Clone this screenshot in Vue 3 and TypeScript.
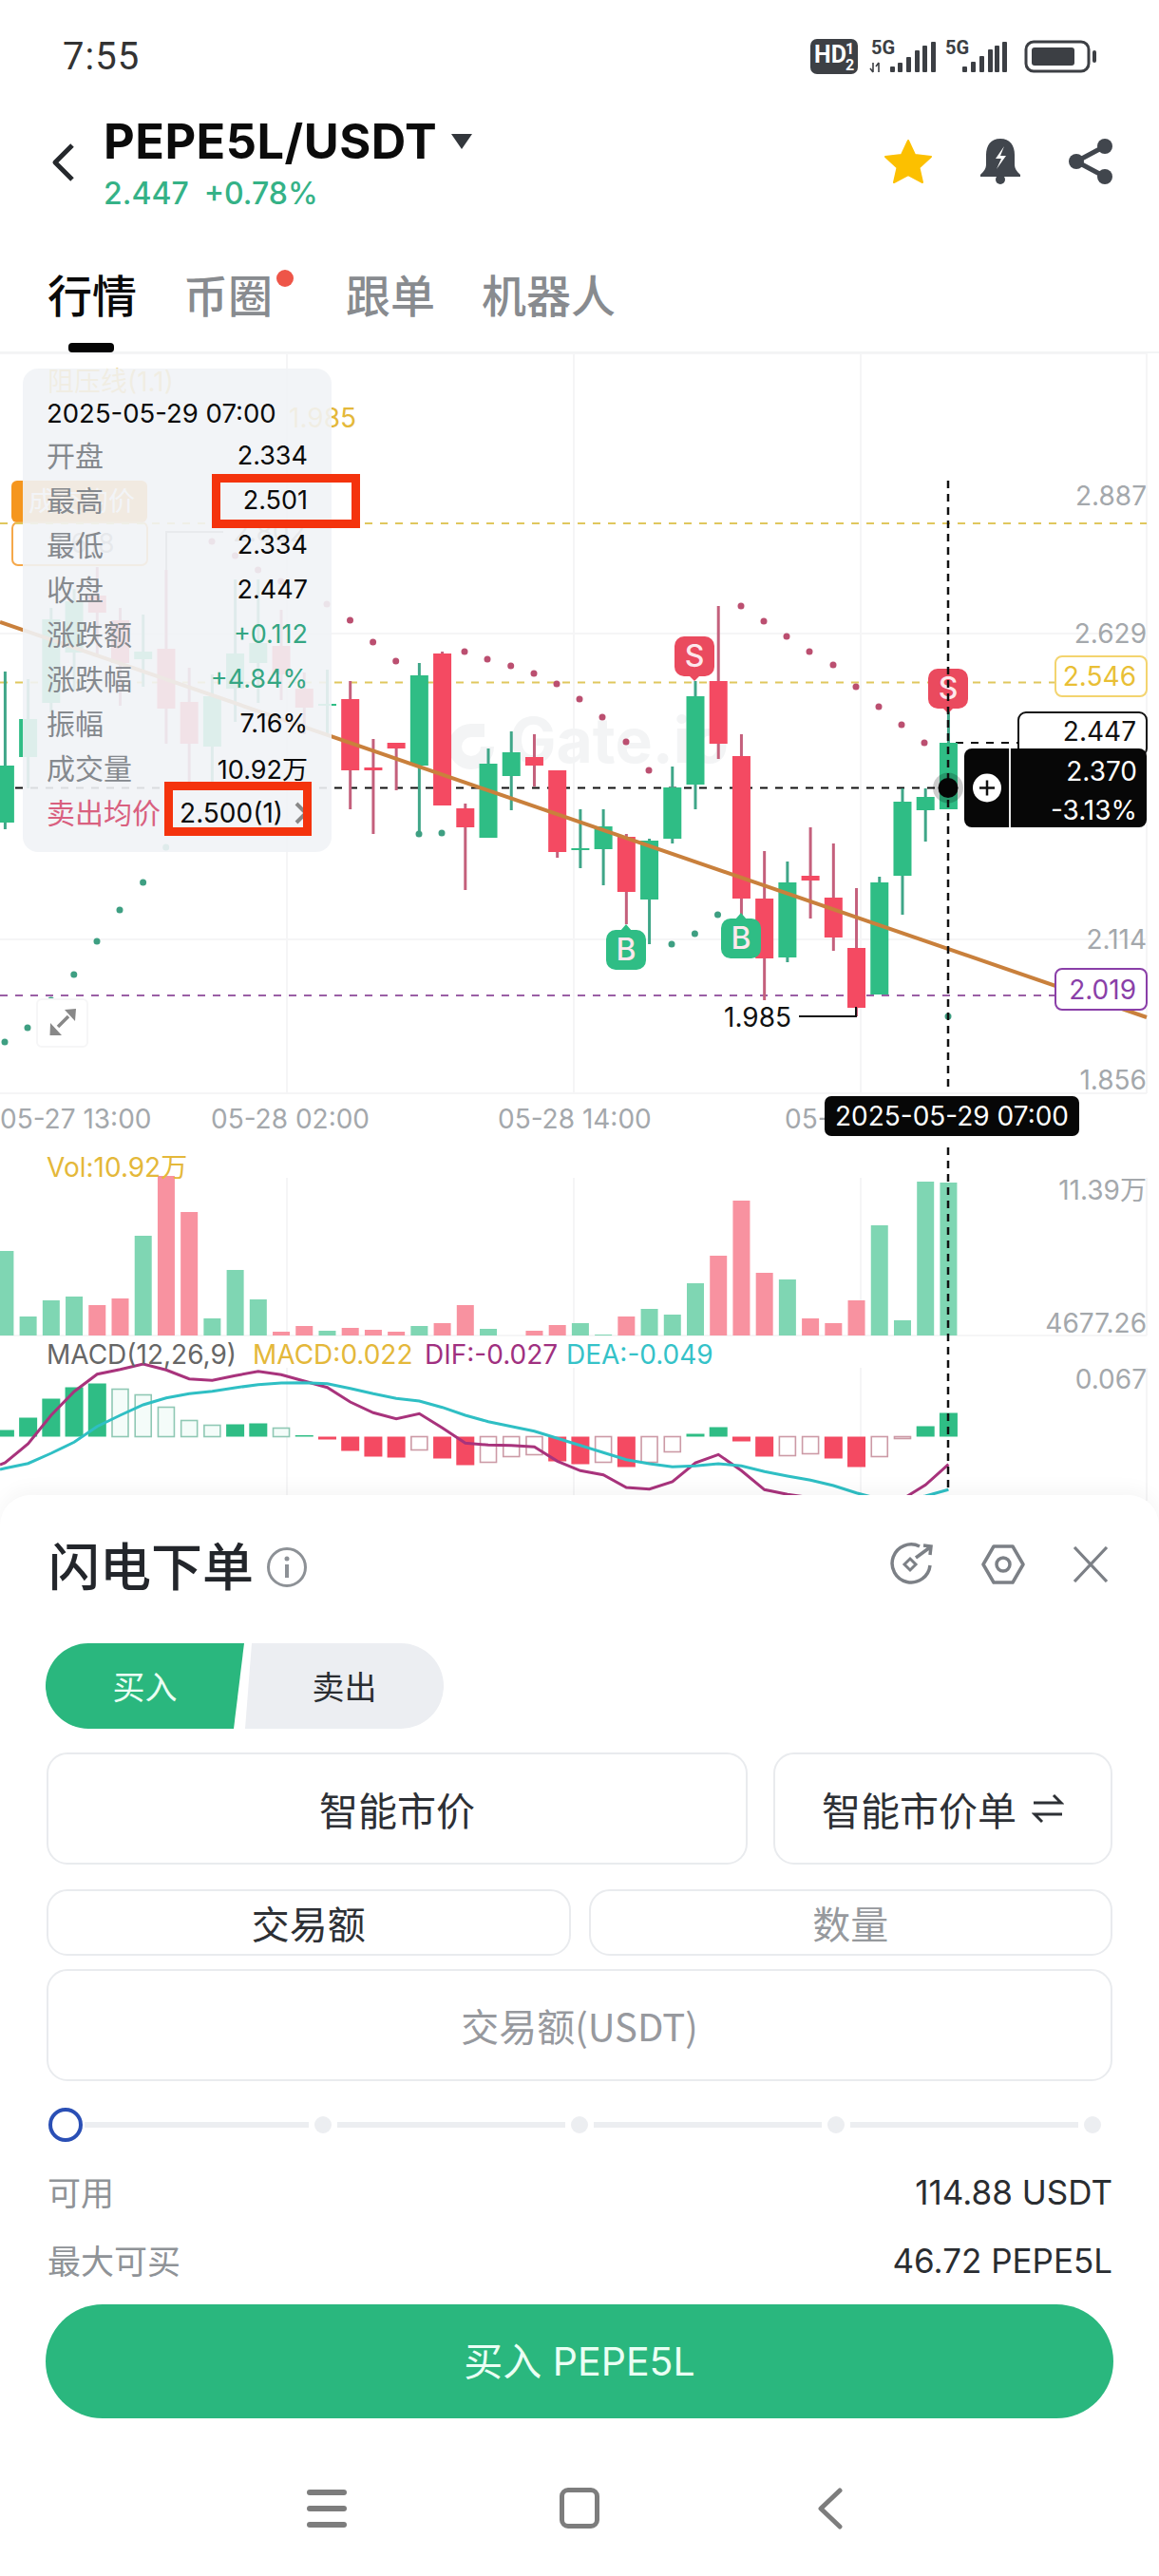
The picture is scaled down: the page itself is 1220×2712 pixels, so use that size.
<script setup lang="ts">
type Candle = [string, number, number, number, number]
const X = (i: number) => 5.4 + 24.22 * i
const candles: Candle[] = [
  ['g', 806, 866, 707, 873], ['g', 757, 797, 715, 830], ['g', 652, 740, 640, 750], ['g', 633, 687, 620, 727],
  ['r', 627, 645, 597, 690], ['r', 653, 698, 640, 743], ['g', 686, 694, 647, 723], ['r', 683, 746, 600, 783],
  ['r', 739, 783, 703, 827], ['g', 733, 786, 710, 826], ['g', 688, 725, 610, 760], ['g', 677, 698, 610, 740],
  ['r', 680, 710, 642, 737], ['r', 725, 745, 708, 773], ['g', 741, 743, 705, 773], ['r', 736, 811, 717, 852],
  ['r', 808, 811, 778, 878], ['r', 782, 788, 782, 832], ['g', 711, 806, 698, 878], ['r', 688, 848, 686, 848],
  ['r', 851, 871, 846, 937], ['g', 804, 882, 788, 882], ['g', 792, 817, 770, 853], ['r', 797, 806, 773, 828],
  ['r', 811, 897, 811, 903], ['g', 893, 895, 852, 914], ['g', 870, 894, 852, 932], ['r', 881, 939, 878, 973],
  ['g', 885, 947, 883, 994], ['g', 829, 883, 807, 888], ['g', 733, 826, 717, 852], ['r', 717, 783, 638, 799],
  ['r', 796, 946, 773, 963], ['r', 946, 1009, 896, 1053], ['g', 929, 1008, 907, 1013], ['r', 922, 927, 871, 967],
  ['r', 945, 987, 888, 1001], ['r', 998, 1061, 935, 1070], ['g', 929, 1047, 923, 1047], ['g', 844, 922, 830, 963],
  ['g', 839, 853, 830, 886], ['g', 782, 852, 748, 852]
]
const vols: [string, number][] = [
  ['g', 89], ['g', 20], ['g', 37], ['g', 41], ['r', 32], ['r', 39], ['g', 105], ['r', 168], ['r', 130], ['g', 18], ['g', 69],
  ['g', 38], ['r', 4], ['r', 10], ['g', 5], ['r', 8], ['r', 6], ['r', 4], ['g', 10], ['r', 13], ['r', 32], ['g', 7], ['g', 0],
  ['r', 5], ['r', 11], ['g', 13], ['g', 1], ['r', 20], ['g', 28], ['g', 22], ['g', 55], ['r', 84], ['r', 142], ['r', 66],
  ['g', 59], ['r', 18], ['r', 13], ['r', 37], ['g', 116], ['g', 16], ['g', 162], ['g', 161]
]
const macd: [number, number][] = [
  [7, 1], [20, 1], [40, 1], [52, 1], [56, 1], [50, 0], [44, 0], [31, 0], [17, 0], [12, 0], [13, 1], [14, 1], [9, 0], [1.5, 1],
  [-3, 1], [-15, 1], [-21, 1], [-22, 1], [-14, 0], [-23, 1], [-30, 1], [-27, 0], [-21, 0], [-19, 0], [-26, 1], [-29, 1],
  [-27, 0], [-32, 1], [-27, 0], [-16, 0], [3, 1], [10, 1], [-5, 1], [-21, 1], [-20, 0], [-18, 0], [-23, 1], [-32, 1],
  [-21, 0], [-2, 0], [11, 1], [25, 1]
]
const difZ = [1080, 1020, 930, 855, 800, 785, 768, 787, 815, 820, 805, 791, 802, 822, 842, 888, 922, 941, 925, 970, 1018, 1024, 1025, 1030, 1075, 1105, 1118, 1158, 1163, 1140, 1080, 1054, 1105, 1165, 1180, 1190, 1210, 1230, 1230, 1195, 1150, 1085]
const deaZ = [1097, 1082, 1050, 1015, 965, 930, 897, 875, 862, 854, 843, 833, 828, 827, 830, 845, 862, 877, 885, 905, 930, 950, 965, 980, 1003, 1025, 1048, 1070, 1083, 1093, 1090, 1083, 1090, 1108, 1122, 1135, 1152, 1175, 1195, 1200, 1185, 1165]
const line = (z: number[]) => z.map((v, i) => `${X(i).toFixed(1)},${(1180 + v / 3).toFixed(1)}`).join(' ')
const difPts = '0,1542 ' + line(difZ)
const deaPts = '0,1547 ' + line(deaZ)
const redDots = [[223, 570], [247.5, 585], [271.6, 600], [295.7, 612], [344, 636], [368.5, 653], [392.6, 676], [416.7, 696], [489, 686], [513, 694], [537.7, 701], [562, 709], [586, 720], [610, 736], [634, 755], [659, 781], [683, 811], [780, 638], [804, 654], [828, 670], [852, 686], [877, 700], [901, 723], [925, 744], [949, 763], [973, 782]]
const greenDots = [[5, 1097], [29, 1082], [53.7, 1053], [77.8, 1026], [102, 991], [126, 958], [150.6, 929], [174.7, 892], [441, 878], [465, 877], [707, 994], [731.4, 983], [755.5, 963], [998, 1070]]
const rows = [
  { k: '开盘', v: '2.334' }, { k: '最高', v: '2.501' }, { k: '最低', v: '2.334' }, { k: '收盘', v: '2.447' },
  { k: '涨跌额', v: '+0.112', c: 'up' }, { k: '涨跌幅', v: '+4.84%', c: 'up' }, { k: '振幅', v: '7.16%' }, { k: '成交量', v: '10.92万' }
]
const grid = [372, 667, 989, 1151, 1406]
const gridV = [302, 604, 906, 1207]
const axis = [['2.887', 522], ['2.629', 667], ['2.114', 989], ['1.856', 1137], ['11.39万', 1253], ['4677.26', 1393], ['0.067', 1452]]
const times = [['05-27 13:00', 0], ['05-28 02:00', 222], ['05-28 14:00', 524], ['05-', 826]]
const markers = [
  { t: 'S', x: 731, y: 670, up: false }, { t: 'S', x: 998, y: 704, up: false },
  { t: 'B', x: 659, y: 979, up: true }, { t: 'B', x: 780, y: 967, up: true }
]
</script>

<template>
  <div class="page">
    <div class="status">
      <span class="time">7:55</span>
      <svg class="sys" width="302" height="50" viewBox="854 30 302 50">
        <rect x="854" y="41" width="50" height="37" rx="7" fill="#3d4045" />
        <text x="858" y="66" class="hd">HD</text>
        <text x="891" y="57" class="hd2">1</text>
        <text x="891" y="74" class="hd2">2</text>
        <g fill="#3c3f44">
          <text x="918" y="57" class="five">5G</text>
          <path d="M920 66v10M917 72l3 4M926 76V66M923 70l3-4" stroke="#3c3f44" stroke-width="1.6" fill="none" />
          <rect x="938" y="70" width="5" height="6" rx="1" />
          <rect x="946" y="66" width="5" height="10" rx="1" />
          <rect x="955" y="60" width="5" height="16" rx="1" />
          <rect x="964" y="53" width="5" height="23" rx="1" />
          <rect x="972" y="48" width="5" height="28" rx="1" />
          <rect x="981" y="44" width="5" height="32" rx="1" />
          <text x="996" y="57" class="five">5G</text>
          <rect x="1014" y="70" width="5" height="6" rx="1" />
          <rect x="1023" y="65" width="5" height="11" rx="1" />
          <rect x="1032" y="59" width="5" height="17" rx="1" />
          <rect x="1041" y="52" width="5" height="24" rx="1" />
          <rect x="1048" y="48" width="5" height="28" rx="1" />
          <rect x="1056" y="44" width="5" height="32" rx="1" />
        </g>
        <rect x="1081" y="44" width="66" height="31" rx="8" fill="none" stroke="#3c3f44" stroke-width="3" />
        <rect x="1087" y="50" width="45" height="19" rx="3" fill="#3c3f44" />
        <rect x="1151" y="53" width="4" height="13" rx="2" fill="#3c3f44" />
      </svg>
    </div>

    <header class="head">
      <svg class="back" width="28" height="42" viewBox="0 0 28 42"><path d="M24 3 6 21l18 18" fill="none" stroke="#25282c" stroke-width="5" stroke-linejoin="round" /></svg>
      <div class="title-col">
        <div class="title">PEPE5L/USDT<svg class="caret" width="24" height="16" viewBox="0 0 24 16"><path d="M1 0h22L12 16z" fill="#33373c" /></svg></div>
        <div class="price"><span>2.447</span><span>+0.78%</span></div>
      </div>
      <div class="actions">
        <svg width="52" height="48" viewBox="0 0 52 48"><path d="M26 2l7 15 17 2-12.500 11.500L41 46 26 38 11 46l3.500-15.500L2 19l17-2z" fill="#fcc000" stroke="#fcc000" stroke-width="2" stroke-linejoin="round" /></svg>
        <svg width="44" height="48" viewBox="0 0 44 48"><path d="M22 0c10 0 15 7 15 17v10c0 5 3 8 6 11v2H1v-2c3-3 6-6 6-11V17C7 7 12 0 22 0z" fill="#41464d" /><circle cx="22" cy="43" r="5" fill="#41464d" /><path d="M26 8l-9 13h6l-5 11 10-14h-6z" fill="#fff" /></svg>
        <svg width="48" height="48" viewBox="0 0 48 48"><path d="M39 8 9 24l30 16" fill="none" stroke="#41464d" stroke-width="5" /><circle cx="39" cy="8" r="8" fill="#41464d" /><circle cx="9" cy="24" r="8" fill="#41464d" /><circle cx="39" cy="40" r="8" fill="#41464d" /></svg>
      </div>
    </header>

    <nav class="tabs">
      <span class="tab on">行情</span>
      <span class="tab dotted">币圈<i class="red-dot"></i></span>
      <span class="tab">跟单</span>
      <span class="tab">机器人</span>
      <i class="ink"></i>
    </nav>

    <section class="chart">
      <svg class="plot" width="1220" height="1228" viewBox="0 372 1220 1228">
        <g stroke="#f5f5f6" stroke-width="2">
          <line v-for="y in grid" :key="y" x1="0" x2="1207" :y1="y" :y2="y" />
          <line v-for="x in gridV" :key="x" :x1="x" :x2="x" y1="372" y2="1151" />
          <line v-for="x in gridV" :key="'v' + x" :x1="x" :x2="x" y1="1240" y2="1406" />
          <line v-for="x in gridV" :key="'m' + x" :x1="x" :x2="x" y1="1440" y2="1580" />
        </g>

        <g class="wm"><path d="M510 762h-14a24 24 0 1 0 24 24h-14a10 10 0 1 1-10-10h14z" /><text x="536" y="803">Gate.io</text></g>

        <text x="50" y="412" class="t yel">阻压线(1.1)</text>
        <text x="304" y="450" class="t yel">1.985</text>
        <rect x="12" y="506" width="143" height="44" rx="6" fill="#f5961e" />
        <text x="30" y="538" class="t" fill="#fff">成交均价</text>
        <rect x="13" y="550" width="142" height="45" rx="6" fill="#fff" stroke="#f5a84a" stroke-width="2" />
        <text x="50" y="582" class="t" fill="#888">2.618</text>
        <text x="245" y="570" class="t" fill="#888">2.802</text>
        <path d="M175 700V560h60" fill="none" stroke="#999" stroke-width="2" />

        <line x1="0" x2="1207" y1="551" y2="551" class="dash y" />
        <line x1="0" x2="1112" y1="718.500" y2="718.500" class="dash y" />
        <line x1="0" x2="1112" y1="1048" y2="1048" class="dash p" />
        <line x1="0" x2="1000" y1="829.500" y2="829.500" class="dash k" />
        <line x1="1006" x2="1072" y1="782" y2="782" class="dash k" />

        <g v-for="(c, i) in candles" :key="i">
          <line :x1="X(i)" :x2="X(i)" :y1="c[3]" :y2="c[4]" :class="c[0] === 'g' ? 'wg' : 'wr'" stroke-width="3" />
          <rect :x="X(i) - 9.500" :y="c[1]" width="19" :height="c[2] - c[1]" :fill="c[0] === 'g' ? '#2fbd85' : '#f44a62'" />
        </g>

        <line x1="0" y1="655" x2="1207" y2="1071" stroke="#c9803c" stroke-width="4" />

        <circle v-for="d in redDots" :key="'r' + d[0]" :cx="d[0]" :cy="d[1]" r="3.500" fill="#bb4f70" />
        <circle v-for="d in greenDots" :key="'g' + d[0]" :cx="d[0]" :cy="d[1]" r="3.500" fill="#3e9f82" />

        <g v-for="m in markers" :key="m.x">
          <path v-if="m.up" :d="`M${m.x - 6} ${m.y + 1}l6-7 6 7z`" fill="#2fbd85" />
          <path v-else :d="`M${m.x - 6} ${m.y + 41}l6 6 6-6z`" fill="#ea4a5e" />
          <rect :x="m.x - 21" :y="m.y" width="42" height="42" rx="10" :fill="m.up ? '#2fbd85' : '#ea4a5e'" />
          <text :x="m.x" :y="m.y + 32" class="mk" text-anchor="middle">{{ m.t }}</text>
        </g>

        <path d="M841 1070h60v-10" fill="none" stroke="#111" stroke-width="2" />
        <text x="762" y="1081" class="t" fill="#111">1.985</text>

        <g>
          <rect x="39" y="1052" width="53" height="50" rx="5" fill="#fff" stroke="#f6f6f7" stroke-width="2" />
          <path d="M80 1062l-12 1 11 12zM52.500 1090l.5-13 12 13z" fill="#888" />
          <path d="M72 1070l-11 11" stroke="#888" stroke-width="3.500" />
        </g>

        <g stroke="none">
          <rect v-for="(v, i) in vols" :key="'b' + i" :x="X(i) - 9" :y="1406 - v[1]" width="18" :height="v[1]" :fill="v[0] === 'g' ? '#7fd6b3' : '#f892a0'" />
        </g>

        <g v-for="(m, i) in macd" :key="'h' + i">
          <rect v-if="m[1]" :x="X(i) - 9.500" :y="m[0] > 0 ? 1512.500 - m[0] : 1512.500" width="19" :height="Math.abs(m[0])" :fill="m[0] > 0 ? '#2fbd85' : '#f44a62'" />
          <rect v-else :x="X(i) - 8.500" :y="(m[0] > 0 ? 1512.500 - m[0] : 1512.500)" width="17" :height="Math.abs(m[0])" :fill="m[0] > 0 ? '#f4fcf9' : '#fff'" :stroke="m[0] > 0 ? '#8fc8b4' : '#cc9aa6'" stroke-width="1.600" />
        </g>
        <polyline :points="difPts" fill="none" stroke="#a8337c" stroke-width="3" />
        <polyline :points="deaPts" fill="none" stroke="#2fbfc4" stroke-width="3" />

        <line x1="998" x2="998" y1="506" y2="1150" class="dash k v" />
        <line x1="998" x2="998" y1="1208" y2="1570" class="dash k v" />

        <circle cx="998" cy="829.500" r="16" fill="#000" opacity=".2" />
        <circle cx="998" cy="829.500" r="10.500" fill="#050505" />

        <text v-for="a in axis" :key="a[0]" x="1207" :y="Number(a[1]) + 10" class="t ax" text-anchor="end">{{ a[0] }}</text>
        <text v-for="t in times" :key="t[1]" :x="t[1]" y="1188" class="t ax">{{ t[0] }}</text>

        <rect x="1111" y="691" width="96" height="42" rx="7" fill="#fff" stroke="#f3d46f" stroke-width="2" />
        <text x="1196" y="722" class="t" fill="#e9bf35" text-anchor="end">2.546</text>
        <rect x="1111" y="1020" width="96" height="43" rx="7" fill="#fff" stroke="#8a3fa8" stroke-width="2" />
        <text x="1196" y="1052" class="t" fill="#8a3fa8" text-anchor="end">2.019</text>

        <rect x="1072" y="750" width="135" height="46" rx="8" fill="#fff" stroke="#111" stroke-width="2" />
        <text x="1196" y="780" class="t" fill="#111" text-anchor="end">2.447</text>
        <rect x="1015" y="788" width="192" height="83" rx="8" fill="#070707" />
        <line x1="1063" x2="1063" y1="788" y2="871" stroke="#e8e8e8" stroke-width="2" />
        <circle cx="1039" cy="829.500" r="15" fill="#fff" />
        <path d="M1031 829.500h16M1039 821.500v16" stroke="#111" stroke-width="2.500" />
        <text x="1197" y="822" class="t" fill="#fff" text-anchor="end">2.370</text>
        <text x="1197" y="863" class="t" fill="#fff" text-anchor="end">-3.13%</text>

        <rect x="868" y="1154" width="268" height="42" rx="7" fill="#070707" />
        <text x="1002" y="1185" class="t" fill="#fff" text-anchor="middle">2025-05-29 07:00</text>

        <text x="49" y="1239" class="t yel">Vol:10.92万</text>
        <text x="49" y="1436" class="t" fill="#666">MACD(12,26,9)</text>
        <text x="266" y="1436" class="t yel">MACD:0.022</text>
        <text x="447" y="1436" class="t" fill="#a03080">DIF:-0.027</text>
        <text x="596" y="1436" class="t" fill="#35c2c8">DEA:-0.049</text>
      </svg>

      <div class="tip">
        <div class="tip-date">2025-05-29 07:00</div>
        <div v-for="r in rows" :key="r.k" class="tip-row">
          <span class="tip-k">{{ r.k }}</span>
          <span :class="['tip-v', r.c]">{{ r.v }}</span>
        </div>
        <div class="tip-row">
          <span class="tip-k sell">卖出均价</span>
          <span class="tip-v avg">2.500(1)<svg width="14" height="24" viewBox="0 0 14 24"><path d="M2 2l10 10L2 22" fill="none" stroke="#888" stroke-width="4" /></svg></span>
        </div>
      </div>
      <i class="frame f1"></i>
      <i class="frame f2"></i>
    </section>

    <section class="sheet">
      <div class="sheet-head">
        <h2>闪电下单</h2>
        <svg class="info" width="44" height="44" viewBox="0 0 44 44"><circle cx="22" cy="22" r="19.500" fill="none" stroke="#8d9196" stroke-width="3" /><circle cx="22" cy="13" r="2.500" fill="#8d9196" /><path d="M22 19v14" stroke="#8d9196" stroke-width="4" /></svg>
        <div class="sheet-ic">
          <svg width="46" height="46" viewBox="0 0 46 46"><path d="M31 4A20 20 0 1 0 42 24M35 3l8 1-1 9M27 16l15-11" fill="none" stroke="#7c8086" stroke-width="3.500" /><path d="M21 17l6 6-6 6-6-6z" fill="none" stroke="#7c8086" stroke-width="3" /></svg>
          <svg width="46" height="42" viewBox="0 0 46 42"><path d="M13 2h20l11 19-11 19H13L2 21z" fill="none" stroke="#7c8086" stroke-width="3.500" stroke-linejoin="round" /><circle cx="23" cy="21" r="7" fill="none" stroke="#7c8086" stroke-width="3.500" /></svg>
          <svg width="38" height="38" viewBox="0 0 38 38"><path d="M2 1l34 36M36 1L2 37" fill="none" stroke="#7c8086" stroke-width="3.200" /></svg>
        </div>
      </div>

      <div class="toggle">
        <span class="buy">买入</span>
        <span class="sell-t">卖出</span>
      </div>

      <div class="row r1">
        <div class="box">智能市价</div>
        <div class="box">智能市价单<svg width="34" height="32" viewBox="0 0 34 32"><path d="M2 10h29l-8-8M32 22H3l8 8" fill="none" stroke="#2d3035" stroke-width="3" /></svg></div>
      </div>
      <div class="row r2">
        <div class="box">交易额</div>
        <div class="box muted">数量</div>
      </div>
      <div class="box input muted">交易额(USDT)</div>

      <div class="slider">
        <i class="knob"></i>
        <template v-for="n in 4" :key="n"><i :class="['seg', { first: n === 1 }]"></i><i class="stop"></i></template>
      </div>

      <div class="info-row first"><span>可用</span><b>114.88 USDT</b></div>
      <div class="info-row"><span>最大可买</span><b>46.72 PEPE5L</b></div>

      <div class="cta">买入 PEPE5L</div>

      <div class="navbar">
        <span class="burger"><i></i><i></i><i></i></span>
        <span class="home"></span>
        <svg class="nav-back" width="28" height="44" viewBox="0 0 28 44"><path d="M25 3 5 22l20 19" fill="none" stroke="#7d7d7d" stroke-width="5" stroke-linecap="round" stroke-linejoin="round" /></svg>
      </div>
    </section>
  </div>
</template>

<style scoped>
.page { width: 1220px; height: 2712px; overflow: hidden; background: #fff; font-family: Inter, "Noto Sans CJK SC", sans-serif; color: #111; }
.status { height: 100px; display: flex; justify-content: space-between; padding: 0 65px 0 66px; box-sizing: border-box; }
.time { font: 40px/40px Roboto, sans-serif; color: #333; margin-top: 40px; letter-spacing: 1px; }
.sys { margin-top: 30px; }
.hd { font: 700 25px Roboto, sans-serif; fill: #fff; }
.hd2 { font: 700 16px Roboto, sans-serif; fill: #fff; }
.five { font: 700 20px Roboto, sans-serif; }
.head { height: 150px; display: flex; align-items: flex-start; padding: 0 48px 0 52px; box-sizing: border-box; }
.back { margin-top: 50px; }
.title-col { margin-left: 29px; padding-top: 14px; }
.title { font: 700 50.5px/70px Inter, sans-serif; letter-spacing: .5px; color: #0b0b0b; display: flex; }
.caret { margin: 27px 0 0 14px; }
.price { font: 500 32px/40px Inter, sans-serif; color: #35b287; display: flex; gap: 16px; }
.actions { margin-left: auto; margin-top: 46px; display: flex; gap: 49px; }
.tabs { position: relative; height: 122px; display: flex; align-items: center; gap: 49px; padding: 0 0 0 50px; box-sizing: border-box; border-bottom: 2px solid #f3f4f5; font-family: "Noto Sans CJK SC", sans-serif; }
.tab { position: relative; font-size: 47px; line-height: 60px; font-weight: 500; color: #888b8f; margin-top: -2px; }
.tab.on { color: #0a0a0a; }
.tab.dotted { margin-right: 28px; }
.red-dot { position: absolute; left: 98px; top: 5px; width: 18px; height: 18px; border-radius: 50%; background: #ee5548; }
.ink { position: absolute; left: 72px; bottom: -1px; width: 48px; height: 10px; border-radius: 4px; background: #050505; }
.chart { position: relative; height: 1228px; }
.plot { display: block; }
.t { font: 28px Inter, "Noto Sans CJK SC", sans-serif; }
.yel { fill: #e4b83a; }
.ax { fill: #a4a8ac; }
.wm { fill: #f3f4f5; }
.wm text { font: 700 66px Inter, sans-serif; }
.mk { font: 500 32px Inter, sans-serif; fill: #fde8ec; }
.dash { stroke-width: 2; stroke-dasharray: 8 8; }
.dash.y { stroke: #e0c75e; }
.dash.p { stroke: #9a5fa5; }
.dash.k { stroke: #111; }
.dash.v { stroke-width: 2.500; stroke-dasharray: 8 6; }
.wg { stroke: #3fa688; }
.wr { stroke: #c4607c; }
.tip { position: absolute; left: 24px; top: 16px; width: 325px; height: 509px; box-sizing: border-box; padding: 24px 25px 0; border-radius: 16px; background: rgba(241, 243, 246, .9); }
.tip-date { font-size: 27.5px; line-height: 47px; color: #0a0a0a; white-space: nowrap; margin-bottom: -3px; }
.tip-row { display: flex; justify-content: space-between; align-items: center; height: 47px; }
.tip-k { font: 30px/47px "Noto Sans CJK SC", sans-serif; color: #85898e; margin-top: -2px; }
.tip-k.sell { color: #d9607f; }
.tip-v { font-size: 27px; color: #0a0a0a; }
.tip-v.up { color: #35a683; }
.tip-v.avg { display: flex; align-items: center; gap: 12px; font-size: 28px; margin-right: 0; white-space: nowrap; }
.frame { position: absolute; box-sizing: border-box; border: 9px solid #f4330d; }
.f1 { left: 223px; top: 127px; width: 156px; height: 57px; }
.f2 { left: 173px; top: 451px; width: 155px; height: 57px; }
.sheet { position: relative; z-index: 1; margin-top: -26px; height: 1138px; box-sizing: border-box; padding: 0 48px; background: #fff; border-radius: 32px 32px 0 0; box-shadow: 0 -6px 20px rgba(0, 0, 0, .04); font-family: "Noto Sans CJK SC", sans-serif; }
.sheet-head { height: 146px; display: flex; align-items: center; }
h2 { margin: 0 0 0 3px; font-size: 54px; line-height: 60px; font-weight: 500; color: #23262b; }
.info { margin: 6px 0 0 13px; }
.sheet-ic { margin-left: auto; display: flex; align-items: center; gap: 50px; margin-right: 5px; }
.toggle { margin-top: 10px; height: 90px; display: flex; font-size: 34px; line-height: 90px; text-align: center; }
.buy { width: 209px; background: #2ab77e; color: #eafff4; border-radius: 45px 0 0 45px; clip-path: polygon(0 0, 100% 0, calc(100% - 11px) 100%, 0 100%); }
.sell-t { width: 209px; margin-left: 1px; background: #eceef2; color: #2a2d31; border-radius: 0 45px 45px 0; clip-path: polygon(7px 0, 100% 0, 100% 100%, 0 100%); }
.row { display: grid; padding: 0 1px; }
.r1 { margin-top: 25px; height: 118px; grid-template-columns: 738px 1fr; gap: 27px; font-size: 41px; }
.r2 { margin-top: 26px; height: 70px; grid-template-columns: 1fr 1fr; gap: 19px; font-size: 40px; }
.box { display: flex; align-items: center; justify-content: center; gap: 16px; box-sizing: border-box; border: 2px solid #e9ebee; border-radius: 22px; color: #2d3035; }
.muted { color: #96999d; }
.input { margin: 14px 1px 0; height: 118px; font-size: 40px; color: #97999e; }
.slider { margin: 28px 0 0 3px; height: 36px; display: flex; align-items: center; gap: 6px; }
.knob { width: 36px; height: 36px; box-sizing: border-box; border: 4px solid #2a4fb5; border-radius: 50%; margin-right: -4px; background: #fff; }
.seg { width: 240px; height: 6px; background: #eceef1; }
.seg.first { width: 236px; }
.stop { width: 18px; height: 18px; border-radius: 50%; background: #eceef1; }
.info-row { margin-top: 22px; height: 50px; display: flex; justify-content: space-between; align-items: center; padding: 0 1px 0 2px; }
.info-row.first { margin-top: 28px; }
.info-row span { font-size: 35px; color: #8f9397; margin-top: -4px; }
.info-row b { font: 400 35px Inter, sans-serif; color: #2a2d31; }
.cta { margin-top: 21px; height: 120px; border-radius: 60px; background: #2ab77e; color: #eafff4; font: 41px/120px Inter, "Noto Sans CJK SC", sans-serif; text-align: center; }
.navbar { margin-top: 73px; height: 43px; display: flex; align-items: center; padding-left: 275px; gap: 224px; }
.burger { display: flex; flex-direction: column; gap: 11px; width: 42px; }
.burger i { display: block; height: 6px; border-radius: 3px; background: #7d7d7d; }
.home { width: 42px; height: 43px; box-sizing: border-box; border: 5px solid #7d7d7d; border-radius: 9px; }
.nav-back { margin-left: 4px; }
</style>
